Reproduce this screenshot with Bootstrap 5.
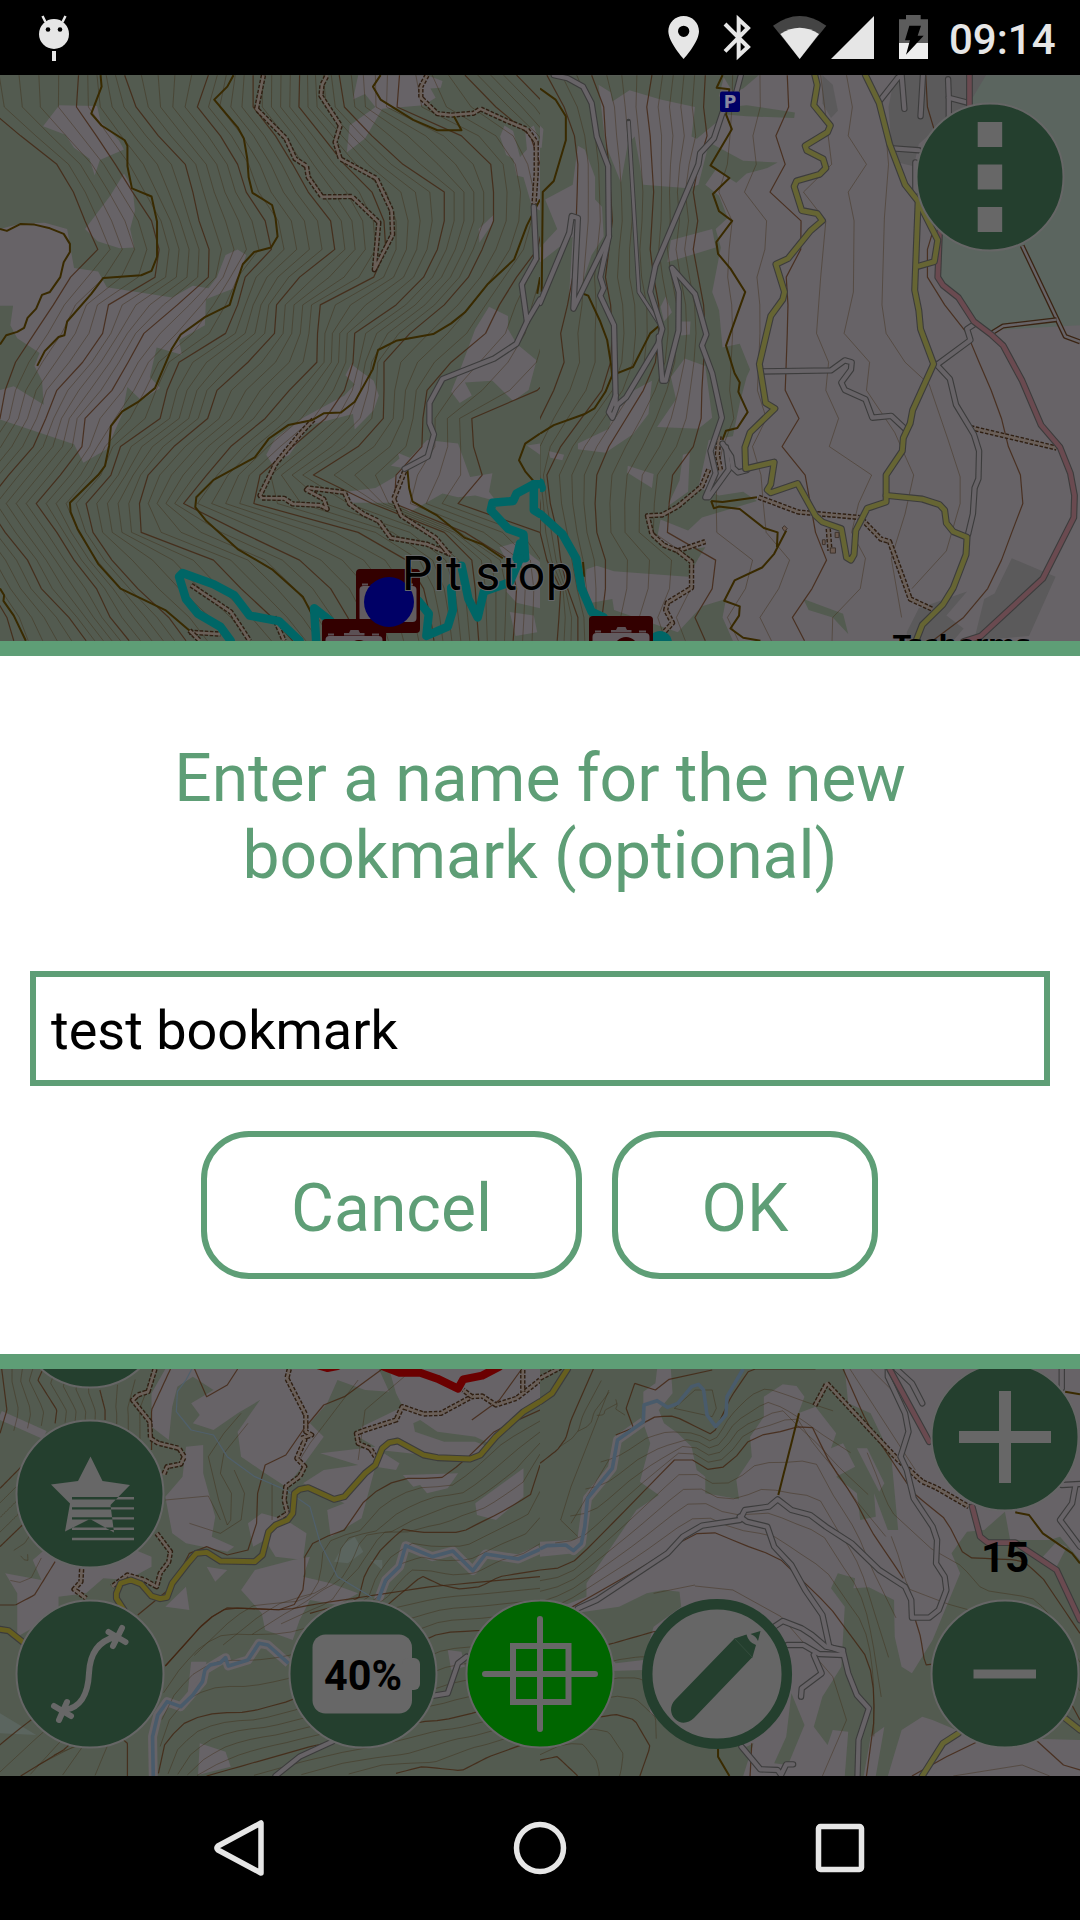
<!DOCTYPE html>
<html lang="en">
<head>
<meta charset="utf-8">
<meta name="viewport" content="width=device-width, initial-scale=1">
<title>New bookmark</title>
<link href="https://cdn.jsdelivr.net/npm/bootstrap@5.3.0/dist/css/bootstrap.min.css" rel="stylesheet">
<style>
body{font-family:Roboto,"Noto Sans",sans-serif;background:#000;width:1080px;height:1920px;overflow:hidden}
.statusbar{height:75px;color:#e6e6e6;font-size:42px;font-weight:500;line-height:1}
.clock{width:131px;padding-top:4px}
.stage{height:1701px}
.navkeys{height:144px}
.mapcanvas{display:block}
.ctl{width:146px;height:146px;padding:0;border:0;background:none}
.ctl svg,.ctlwide svg{display:block;overflow:visible}
.disc{fill:#243f2e;stroke:#666;stroke-width:2}
.ink{fill:#676767}
.wire{fill:none;stroke:#676767;stroke-width:6;stroke-linecap:round}
.at-menu{left:917px;top:29px}
.at-hidden{left:17px;top:1166px}
.at-star{left:17px;top:1346px}
.at-route{left:17px;top:1526px}
.at-batt{left:290px;top:1526px}
.at-gps{left:467px;top:1526px}
.at-pen{left:641px;top:1523px}
.at-plus{left:932px;top:1289px}
.at-minus{left:932px;top:1526px}
.zoomlevel{left:932px;top:1456px;width:146px;font-size:42px;font-weight:700;color:#000;line-height:54px}
.prompt{top:566px;height:728px;border-top:15px solid #5e9e76;border-bottom:15px solid #5e9e76;padding:84px 30px 0}
.prompt-title{font-size:66px;line-height:77.3px;letter-spacing:-.05px;color:#5e9e76;font-weight:400;margin:0 0 76px}
.prompt-input,.prompt-input:focus{height:115px;border:6px solid #5e9e76;border-radius:0;font-size:54px;line-height:1;color:#000;padding:5px 15px 0;box-shadow:none}
.prompt-row{margin-top:45px;gap:30px;padding-right:1px}
.prompt-btn{height:148px;border:6px solid #5e9e76;border-radius:48px;color:#5e9e76;font-size:66px;line-height:1;padding:8px 0 0}
.w-cancel{width:381px}.w-ok{width:266px}
.mapcanvas polyline,.mapcanvas polygon{vector-effect:non-scaling-stroke;stroke-linejoin:round}
.l{fill:none;stroke-linecap:butt}
</style>
<script src="https://cdn.jsdelivr.net/npm/bootstrap@5.3.0/dist/js/bootstrap.bundle.min.js"></script>
</head>
<body class="d-flex flex-column">
<header class="statusbar d-flex align-items-center justify-content-between flex-shrink-0">
  <svg width="110" height="75" viewBox="0 0 110 75"><path d="M39 34a15 15 0 0 1 30 0a15 15 0 0 1-30 0z" fill="#e6e6e6"/><path d="M45.500 22l-3-6M62.500 22l3-6" stroke="#e6e6e6" stroke-width="2.500"/><path d="M54 51v10" stroke="#e6e6e6" stroke-width="4"/><circle cx="48" cy="29.500" r="2.300"/><circle cx="60" cy="29.500" r="2.300"/></svg>
  <div class="d-flex align-items-center">
    <svg width="299" height="75" viewBox="0 0 897 225">
      <path fill="#e6e6e6" fill-rule="evenodd" d="M101 48c26 0 46 20 46 46 0 33-46 83-46 83S55 127 55 94c0-26 20-46 46-46zm0 29a17 17 0 1 0 0 34 17 17 0 0 0 0-34z"/>
      <path d="M225 72l69 69-28 26V58l28 26-69 70" fill="none" stroke="#e6e6e6" stroke-width="12"/>
      <path d="M449 177L369 77q80-58 160 0z" fill="#444"/><path d="M449 177l-58-75q58-38 116 0z" fill="#e6e6e6"/>
      <path d="M672 48v129H543z" fill="#e6e6e6"/>
      <path d="M747 58h21V45h44v13h22v119h-87z" fill="#5c5c5c"/><path d="M747 129h87v48h-87z" fill="#eee"/><path d="M778 77h35l-10 30h18l-53 57 12-43h-15z" fill="#000"/>
    </svg>
    <span class="clock">09:14</span>
  </div>
</header>

<main class="stage position-relative overflow-hidden flex-shrink-0">
  <svg class="mapcanvas" id="map" width="1080" height="1701" viewBox="0 75 1080 1701"></svg>

  <button class="ctl position-absolute at-menu" aria-label="Menu"><svg width="146" height="146"><circle class="disc" cx="73" cy="73" r="73.500"/><path class="ink" d="M60.700 18h24.500v25H60.700zM60.700 60.500h24.500v25H60.700zM60.700 103h24.500v25H60.700z"/></svg></button>
  <button class="ctl position-absolute at-hidden" aria-label="Tools"><svg width="146" height="146"><circle class="disc" cx="73" cy="73" r="73.500"/></svg></button>
  <button class="ctl position-absolute at-star" aria-label="Bookmarks"><svg width="146" height="146"><circle class="disc" cx="73" cy="73" r="73.500"/><path class="ink" fill-rule="evenodd" d="M73.500 35.500l12 24.500 27.500 4-19.500 20 3.500 27.500-24-13.500-25 12.500 5-28L34 63.500l27-3.500zM55 76h62v2.400H55zM55 86.200h62v2.400H55zM55 96.200h62v2.400H55zM55 106.600h62v2.400H55zM55 116.800h62v2.400H55z"/></svg></button>
  <button class="ctl position-absolute at-route" aria-label="Tracks"><svg width="146" height="146"><circle class="disc" cx="73" cy="73" r="73.500"/><path class="wire" d="M98 36C82 40 73 52 72 72c-1 22-8 34-24 37M91.500 31l17 10M105 27l-9 18M37 105l17 10M50 101l-8 18"/></svg></button>
  <button class="ctl position-absolute at-batt" aria-label="Battery"><svg width="146" height="146"><circle class="disc" cx="73" cy="73" r="73.500"/><rect class="ink" x="22.500" y="33.500" width="99.500" height="79" rx="13"/><rect class="ink" x="112" y="57" width="18" height="32" rx="6"/><text x="73" y="89" font-size="42" font-weight="700" text-anchor="middle" textLength="78" lengthAdjust="spacingAndGlyphs">40%</text></svg></button>
  <button class="ctl position-absolute at-gps" aria-label="Center on position"><svg width="146" height="146"><circle cx="73" cy="73" r="73.500" fill="#060" stroke="#666" stroke-width="2"/><path class="wire" d="M18 73h110M73 18v110M46 45h55.500v56H46z"/></svg></button>
  <button class="ctlwide p-0 border-0 bg-transparent position-absolute at-pen" aria-label="Edit"><svg width="152" height="152"><circle cx="76" cy="76" r="69.800" fill="#666" stroke="#243f2e" stroke-width="10.500"/><path fill="#243f2e" d="M93.500 40.500l12-4q2 8 9.500 10.500l-3.500 12L53 120c-6 6-14 6-19 1s-5.500-13 0-19zM109.500 36l10-3-2.500 10q-2-5-7.500-7z"/><path d="M93.500 40.500l18 19" stroke="#3b5344" stroke-width=".7"/></svg></button>
  <button class="ctl position-absolute at-plus" aria-label="Zoom in"><svg width="146" height="146"><circle class="disc" cx="73" cy="73" r="73.500"/><path class="ink" d="M67 27h12v92H67zM27 67h92v12H27z"/></svg></button>
  <div class="zoomlevel position-absolute text-center">15</div>
  <button class="ctl position-absolute at-minus" aria-label="Zoom out"><svg width="146" height="146"><circle class="disc" cx="73" cy="73" r="73.500"/><path class="ink" d="M41.500 68.600h62.500v8.800H41.500z"/></svg></button>

  <section class="prompt position-absolute start-0 w-100 bg-white" role="dialog">
    <h1 class="prompt-title text-center">Enter a name for the new<br>bookmark (optional)</h1>
    <input class="form-control prompt-input" type="text" value="test bookmark" aria-label="Name">
    <div class="prompt-row d-flex justify-content-center">
      <button class="btn prompt-btn w-cancel">Cancel</button>
      <button class="btn prompt-btn w-ok">OK</button>
    </div>
  </section>
</main>

<nav class="navkeys d-flex justify-content-center align-items-center flex-shrink-0">
  <svg width="300" height="144"><path d="M114 47v50L71 74q-2-2 0-4z" fill="none" stroke="#e6e6e6" stroke-width="5.500" stroke-linejoin="round"/></svg>
  <svg width="186" height="144"><circle cx="93" cy="72" r="23.500" fill="none" stroke="#e6e6e6" stroke-width="5.500"/></svg>
  <svg width="300" height="144"><rect x="185.500" y="50.500" width="43" height="43" rx="2" fill="none" stroke="#e6e6e6" stroke-width="5.500"/></svg>
</nav>

<script>
// Map data, one sheet per quarter of the view. Coordinates are sheet units.
const OPEN='#676367', WOOD='#535b50', MAJOR='rgba(66,36,16,.8)', MINOR='rgba(62,42,18,.42)', PATHC='#392a00';
const rows=[14,100,178,255,330,408,485,560,635,712,790,866,942,1018,1095,1172,1250,1325,1402,1480,1543];
const byRow=s=>s.split(',').map((x,i)=>[+x,rows[i]]);
const pts=s=>s.split(' ').map(p=>p.split(',').map(Number));
// evenly spaced points along a line, so that two lines can be blended
function even(line,n=30){
  const d=[0];for(let i=1;i<line.length;i++)d.push(d[i-1]+Math.hypot(line[i][0]-line[i-1][0],line[i][1]-line[i-1][1]));
  const out=[];let j=1;
  for(let k=0;k<n;k++){const t=d[d.length-1]*k/(n-1);while(j<d.length-1&&d[j]<t)j++;const f=(t-d[j-1])/(d[j]-d[j-1]||1);
    out.push([line[j-1][0]+f*(line[j][0]-line[j-1][0]),line[j-1][1]+f*(line[j][1]-line[j-1][1])]);}
  return out;
}
const blend=(a,b,n)=>{const r=[];for(let k=1;k<=n;k++)r.push(a.map((p,i)=>[p[0]+(b[i][0]-p[0])*k/(n+1),p[1]+(b[i][1]-p[1])*k/(n+1)]));return r;};

const sheets=[
{x:0,y:70,w:540,h:580,vh:1568,ground:WOOD,
 open:['125,152 172,95 282,97 292,140 345,190 360,215 290,243 275,285 260,240 215,210 190,175','360,280 385,320 392,380 378,430 390,480 347,482 283,463 247,430 320,340','0,430 60,415 130,413 195,430 215,535 285,545 310,587 500,615 560,583 605,590 630,560 655,500 690,485 715,500 680,590 598,620 595,690 520,730 528,770 455,750 435,830 465,860 410,893 370,857 355,930 310,1025 242,1062 215,1012 0,945 0,865 40,855 127,905 122,840 100,800 115,765 50,725 30,690 38,637 0,637','1040,14 1240,14 1285,30 1280,48 1250,50 1265,75 1230,95 1110,105 1060,185 1007,223 1015,150 1090,100 1060,65 1025,80','1465,150 1490,165 1510,235 1530,215 1525,165 1550,150 1568,200 1568,380 1545,370 1520,290 1500,285 1490,240 1470,230 1452,180','1390,430 1435,390 1430,415 1392,467','1420,640 1475,665 1475,700 1500,740 1558,785 1535,865 1490,895 1430,840 1350,845 1370,880 1335,900 1310,870 1340,800 1380,700','1020,795 1040,810 1085,840 1100,880 1085,920 1030,972 1025,930 900,960 840,1040 790,1065 773,1040 800,995 880,940 1000,880 1030,850 1003,825','1005,1140 1090,1130 1145,1100 1165,1075 1135,1070 1160,1050 1155,1035 1190,1048 1240,1000 1330,1010 1365,1100 1430,1090 1420,1140 1440,1165 1380,1150 1330,1155 1285,1145 1190,1195 1150,1170 1020,1170','1450,1290 1510,1275 1540,1310 1568,1330 1568,1455 1500,1440 1470,1410 1480,1340','1480,1465 1550,1475 1560,1520 1497,1530','1530,1015 1568,1010 1568,1040'],
 rowfam:[['-60,-40,60,165,213,247,284,205,155,100,45,15,0,-60,-120,-180,-130,-80,-30,20,40',4],['228,222,280,335,385,440,462,450,315,298,240,165,133,97,25,-40,15,80,120,200,250',4],['362,395,460,538,560,578,607,605,515,418,372,325,247,238,175,105,165,215,280,320,375',4],['605,573,640,690,715,770,788,712,690,655,520,485,465,350,322,250,270,325,400,490,540',4],['735,735,800,850,895,960,972,870,803,797,720,630,603,505,430,405,410,620,700,790,850',4],['870,868,935,1000,1080,1115,1120,1085,930,922,920,840,770,670,600,533,700,870,960,1010,1040',4],['985,1000,1080,1170,1290,1290,1270,1230,1150,1030,1025,1000,945,850,755,737,1040,1180,1230,1250,1260',4],['1160,1153,1340,1425,1433,1433,1400,1360,1290,1190,1115,1115,1113,1040,910,1080,1290,1370,1380,1385,1390',3],['1350,1440,1540,1568,1590,1580,1560,1500,1450,1410,1310,1240,1228,1225,1150,1145,1350,1480,1500,1495,1490',3],['1500,1590,1640,1700,1700,1680,1650,1640,1640,1640,1640,1560,1370,1375,1400,1330,1568,1600,1600,1600,1600',0]],
 path:['292,14 295,45 265,118 295,150 362,190 370,205 370,260 383,320 440,342 456,410 456,505 440,543 410,555 300,562 265,605 195,680 187,717 170,722 130,760 108,800','0,430 20,435 60,416 100,418 145,428 185,443 203,470 203,492 185,520 175,560 145,600 122,608 105,645 80,670 70,697 50,708 18,717 0,742','678,14 660,45 622,80 690,155 708,185 718,240 722,290 733,332 790,365 800,400 806,450 787,480 738,492 705,525 685,580 667,635 595,668 525,715 498,755 450,860 400,898 355,923 322,963 317,1015 305,1070 285,1095 203,1170 205,1195 225,1240 285,1335 350,1402 480,1460 550,1515','1568,350 1530,420 1493,512 1415,580 1350,655 1310,685 1258,714 1150,732 1098,757 1082,810 1030,897 990,926 940,928 905,947 837,960 780,997 740,1047 620,1108 570,1155 567,1182 600,1220 690,1295 790,1350 880,1425 905,1470','1105,14 1083,45 1105,80 1200,135 1270,163 1340,163 1318,125','1183,1080 1188,1130 1198,1167 1270,1205 1350,1265 1400,1282 1460,1320','0,1402 12,1420 10,1435 40,1475 75,1543','1568,983 1525,1010 1507,1055 1525,1085 1550,1112','1568,560 1560,605'],
 track:['765,14 745,105 830,185 857,240 890,260 895,290 935,343 1022,342 1100,412 1087,540 1140,445 1137,380 1093,293 988,240 973,195 988,150 932,70 935,40 950,14','1240,14 1222,45 1222,75 1270,118 1310,122 1375,117 1395,105 1470,137 1530,160 1557,195 1557,280 1550,370','910,945 870,985 800,1065 755,1150 760,1157 825,1158 850,1173 930,1177 950,1187 940,1160 890,1135 895,1130 1000,1142 1015,1173 1055,1200 1100,1220 1135,1265 1240,1282 1310,1310','1175,1085 1143,1160 1165,1205 1265,1265 1305,1310','555,1393 670,1465 725,1543','550,1520 640,1525','795,1478 825,1543','550,1515 580,1543'],
 road:['1550,370 1557,510 1515,580 1530,680 1568,620','1530,680 1500,740 1435,780 1285,835 1247,900 1247,955 1260,985 1242,1045 1175,1078'],
 cyan:['1568,1120 1550,1120 1500,1145 1490,1165 1430,1170 1425,1190 1475,1240 1520,1255 1525,1320 1500,1320 1510,1280','1510,1320 1480,1385 1405,1410 1387,1480 1360,1430 1340,1340','1215,1435 1245,1470 1238,1530 1300,1505 1315,1460 1310,1400','1550,1120 1550,1190 1568,1200','670,1543 640,1505 575,1470 540,1430 520,1370 530,1360 620,1390 680,1420 725,1475 810,1490 870,1543','918,1543 912,1455 960,1490']},
{x:540,y:70,w:540,h:580,vh:1568,ground:OPEN,
 wood:['0,14 535,14 520,70 550,100 600,95 740,115 738,130 600,125 540,120 450,190 500,200 590,245 690,250 660,265 600,280 570,305 510,270 480,310 520,340 545,400 510,430 525,480 500,600 520,650 530,750 580,740 610,810 600,830 580,900 560,990 490,1000 460,1130 520,1150 590,1140 630,1165 470,1210 430,1245 350,1215 340,1265 400,1300 480,1290 460,1320 430,1370 215,1355 165,1340 135,1350 130,1400 150,1440 210,1430 215,1460 400,1520 470,1450 540,1430 530,1480 560,1543 0,1543','765,1430 880,1470 895,1525 850,1480 780,1460','530,14 635,14 590,50 560,60'],
 open:['170,40 205,60 210,85 260,55 350,80 450,100 440,180 490,200 460,310 430,320 300,310 275,180 255,200 235,305 190,200','95,310 110,205 130,215 160,290 160,350 180,370 185,450 150,500 100,640 85,600 95,450 0,520 0,480 50,430 15,350','0,150 10,160 5,210 0,210','380,460 500,430 510,480 370,520','350,640 365,612 383,655 360,680','400,680 437,680 435,715 410,718','265,870 325,840 315,930 270,985 190,1035 110,1025 110,1010 200,970 210,930','420,780 480,800 500,940 460,970 340,965 395,890 380,830','255,1070 330,1092 325,1130 253,1088','415,1040 435,1035 430,1140 370,1180 405,1110','25,1030 70,1040 65,1055 30,1048'],
 built:['1030,14 1295,14 1285,70 1240,100 1160,150 1100,200 1085,260 1040,250 1020,200 1012,100','820,14 850,40 865,110 845,130 820,90','1370,1320 1497,1370 1420,1530 1260,1543 1290,1430 1320,1415','1065,1520 1100,1455 1240,1410 1180,1475 1230,1510 1200,1543 1065,1543'],
 park:['1295,14 1568,14 1568,690 1280,705 1160,560 1165,440 1240,100'],
 rowfam:[['20,70,100,110,108,105,100,95,80,60,70,40,0,-30,-10,0,0,20,60,55,50',2],['150,185,190,200,205,210,200,190,205,210,205,180,120,60,20,30,50,60,80,110,110',3],['325,310,320,325,330,325,320,330,345,345,335,300,250,200,165,160,165,190,190,180,190',4],['480,475,485,460,445,458,445,460,475,480,475,470,468,445,385,375,370,510,500,450,480',2],['718,722,685,712,668,758,757,715,720,718,715,712,752,703,770,785,800,832,790,733,768',0],['1120,1125,1150,1200,1170,1150,1125,1125,1175,1240,1275,1310,1340,1360,1395,1402,1370,1340,1300,1230,1140',0]],
 minor:['815,14 847,255 765,330 830,408 815,560 803,712 838,790 830,866 867,942 840,1018 963,1095 925,1172 905,1250 945,1320 930,1402 850,1480 848,1543','890,14 907,100 895,178 948,255 895,330 912,408 910,600 883,712 957,790 948,866 1030,980 1085,1095 1060,1200 1020,1320 1050,1480','1005,178 1012,255 1000,400 993,635 1005,712 1060,790 1130,850 1185,1000 1220,1100 1220,1172 1180,1300 1080,1402'],
 path:['0,50 45,80 75,125 75,190 40,300 8,330 5,600','530,14 513,48 550,52 540,120 557,160 495,258 550,292 502,335 520,382 558,408 512,465 517,497 553,537 596,600 540,745 565,820 580,845 576,870 603,925 573,968 540,975 530,1000','125,605 140,610 175,680 195,730 207,800 210,830','0,983 40,960 130,930 158,915 190,870 210,825 270,803 320,712 345,692','497,1165 530,1168 630,1155','497,1165 505,1185 520,1180 580,1187 650,1238 690,1250 688,1290','715,1245 680,1308 645,1345 565,1380 535,1435 580,1450 578,1475 553,1510 590,1535 640,1543','125,1330 128,1370'],
 lane:['1400,475 1525,720 1568,735','1310,712 1345,692 1500,675'],
 track:['635,1155 750,1195 930,1210 990,1268 1015,1275 1060,1390 1075,1430 1140,1458','1250,967 1500,1022','837,1240 842,1300','490,1080 470,1125 400,1180 355,1203 312,1205 325,1255 360,1285 400,1300 480,1275','400,1300 440,1330 440,1400 370,1440 365,1460 385,1495 360,1520','520,990 515,1040 525,1085'],
 road:['40,14 80,22 125,45 150,90 165,180 198,260 200,450 175,560 185,590 175,610 215,690 220,905','200,450 97,645 110,400 92,395 85,440 0,630','583,14 570,60 530,115 505,185 465,225 460,255 335,530 320,600 355,700 343,740 250,885 225,905 210,940 200,925 220,880','345,720 355,840 365,840 402,705 403,600 383,535 450,605 483,715 470,745 500,820 528,940 495,1030 510,1090 480,1155 490,1155 548,1080 540,1020','530,1010 555,1045 560,1075 575,1088 600,1082','645,815 845,812 885,785 905,790 903,810 875,845 885,865 945,890 965,940 1020,935 1060,970','1150,795 1190,835 1208,905 1260,985 1275,1030 1273,1105 1262,1130 1257,1200 1243,1255','1155,795 1250,730 1240,700 1260,688','985,85 1040,20 1050,14 1058,105','1112,14 1105,125','1185,25 1187,75 1240,88','1187,75 1187,130','1025,212 1100,217','1090,250 1090,330'],
 thin:['257,138 287,600 350,690'],
 pink:['1247,14 1247,110 1160,440 1155,560 1170,582 1215,615 1260,680 1310,715 1345,745 1400,840 1455,960 1510,1020 1540,1090 1552,1150 1550,1210 1460,1375 1280,1530 1230,1545'],
 yellow:['798,14 805,40 795,95 843,150 835,168 770,205 775,218 822,240 830,265 812,282 745,300 738,315 760,380 805,388 820,407 785,435 720,510 685,525 710,600 705,620 670,665 637,795 655,900 682,915 610,980 595,1020 597,1078 680,1060 670,1120 660,1135 670,1143 748,1118 800,1205 820,1222 875,1240 890,1318 903,1325 912,1310 917,1245 950,1185 1005,1168 1005,1095 1052,1030 1055,995 1075,955 1082,920 1143,795 1105,700 1100,650 1088,595 1098,355 1060,310 1015,200 985,90 945,14','1005,1150 1110,1160 1160,1175 1175,1190 1180,1225 1200,1248 1240,1263 1237,1310 1200,1400 1170,1445 1110,1500 1092,1543','1098,355 1155,460 1145,518 1100,530'],
 cyan:['0,1115 5,1130','0,1200 65,1255 105,1320 120,1400 150,1465 185,1480'],
 house:['703,1238 710,1232 718,1240 710,1247','843,1292 858,1292 858,1306 843,1306','820,1270 828,1270 828,1283 820,1283','857,1250 868,1250 868,1264 857,1264']},
{x:0,y:1360,w:540,h:420,vh:1260,ground:WOOD,
 open:['480,27 1100,27 1130,95 1060,90 980,60 950,130 900,190 940,230 870,330 830,380 770,340 700,290 690,215 755,120 690,160 620,210 560,190 580,165 555,130 620,90 560,50 515,80 500,140 490,240 440,200 440,100','590,255 590,340 625,470 615,530 680,560 660,575 540,550 500,520 480,410 530,350 540,260','720,490 760,460 830,480 890,520 880,600 800,590 770,540 735,560','1130,27 1568,27 1568,120 1420,250 1380,230 1270,215 1220,180 1200,190 1205,215 1290,245 1380,245 1420,260 1370,300 1100,270 1160,310 1150,330 1090,320 1050,475 960,530 950,450 1000,430 880,370 940,330 1040,315 930,280 1090,260 1040,230 1050,200 1170,140 1150,100','1170,345 1330,340 1300,385 1240,400 1220,375 1200,380','1380,430 1520,325 1520,410 1440,480 1385,465','370,560 440,590 440,620 370,660 300,655 250,700 170,710 170,760 50,830 50,700 15,640 120,660 95,600 140,560','700,690 740,630 850,600 900,590 880,650 960,670 1040,700 980,735 900,720 870,780 850,840 770,810 760,760','480,740 540,680 550,750','600,620 660,630 625,665','555,905 600,905 580,990 545,1000','580,1150 655,1175 670,1220 575,1245','1300,870 1340,875 1350,920 1310,930'],
 park:['970,605 1000,550 1030,530 1055,575 1010,610','0,1060 105,1125 0,1120','1075,600 1110,600 1110,630'],
 fam:[[['480,918 600,780 660,743 830,750 852,738 885,680 885,570 920,540 1000,510 1060,420 1110,380 1168,355 1280,355 1340,310 1440,210 1568,150',4],['900,760 1040,720 1060,640 1105,570 1168,508 1225,517 1340,517 1390,490 1450,460 1540,405 1568,315',3],['1100,780 1130,730 1225,648 1280,675 1335,687 1395,680 1450,650 1568,630',0]],[['480,918 600,780 660,743 830,750 900,735 1250,680 1568,650',3],['460,1240 480,1145 545,1080 630,1058 720,1057 845,1022 1280,818 1390,812 1568,790',4],['600,1248 900,1160 1225,1085 1290,1080 1370,1060 1568,1000',3],['1150,1240 1225,1220 1340,1232 1420,1190 1568,1135',0]],[['5,27 20,150 0,220',3],['125,27 110,60 165,150 160,190',4],['290,90 305,150 305,180',3],['495,27 440,150 440,270',0]],[['0,385 110,270',3],['0,560 120,440',3],['160,605 100,705 45,735 0,735',0]],[['-100,1240 40,1120 140,1040 200,1160 60,1248',4],['370,1248 370,1150 300,1090',0]]],
 major:['565,27 600,110 660,75 690,27','1110,27 1000,110 940,135 880,210 830,285 770,315 748,400 745,490 720,570 660,585 600,560 550,580 500,680 400,765','1515,27 1450,120 1370,180'],
 minor:['700,160 650,220 605,290 635,420 660,495 670,480 672,400 640,340 650,280 720,190','480,420 605,408 640,480','550,490 640,520 700,480 710,400 680,330','1040,60 900,250 870,300','1200,27 1060,150 1040,300','790,480 790,370'],
 track:['450,27 430,95 400,105 385,120 435,185 437,235 460,250 520,265 535,290 525,312 485,320 475,345','455,520 495,575 490,605 465,640 455,680 420,660 370,645 325,680','840,27 833,55 888,165 888,215 905,225 875,235 885,240 862,295 885,320 870,350 830,380 825,420 835,460 805,480','1090,290 1075,265 1040,250 1035,220 1060,210 1150,180 1168,140 1230,162 1280,160 1370,110 1400,108 1440,135 1500,115 1568,60','1518,30 1518,95','1370,110 1345,90','237,627 235,665 215,688 250,715'],
 bank:['0,165 130,225','445,1248 443,1130 458,1065 485,1025 525,1040 588,965 595,930 655,893 663,918 720,900 752,850 778,855 838,910','1098,720 1120,660 1160,620 1178,557 1255,590 1315,573 1373,632 1410,582 1505,597 1568,568'],
 river:['445,1248 443,1130 458,1065 485,1025 525,1040 560,1005 588,965 595,930 610,915 640,908 655,893 663,918 720,900 752,850 778,855 838,910','1098,720 1120,660 1160,620 1178,557 1255,590 1315,573 1373,632 1410,582 1505,597 1568,568'],
 brook:['557,27 540,60 515,95 512,155 555,210 620,225 660,290 740,350 830,390 900,440 930,550 980,650 1080,712'],
 road:['800,1248 870,1190 965,1145','1260,1007 1300,1000 1330,910 1355,890'],
 gold:['0,808 25,812 65,845','360,750 338,715 338,700 350,670 380,660 410,672 440,708 465,716 485,712 500,670 545,610 570,580 600,577 640,603 740,605 762,585 780,515 800,495 835,480 850,460 855,400 870,388 895,383 970,418 1000,410 1060,340 1090,315 1110,265 1130,248 1155,243 1230,285 1270,293 1365,297 1395,285 1440,230 1520,155 1568,125'],
 red:['1115,20 1160,38 1220,38 1270,56 1330,86 1345,58 1400,47 1450,20','925,16 950,24 980,18']},
{x:540,y:1360,w:540,h:420,vh:1260,ground:OPEN,
 wood:['0,27 340,27 335,70 300,95 300,180 225,230 215,330 135,410 125,520 100,540 0,545','380,27 885,27 895,130 960,160 1020,290 1040,510 1010,510 970,400 975,470 930,480 920,400 860,350 915,320 880,250 845,265 860,220 800,140 750,160 768,110 745,78 705,73 650,110 650,170 610,230 615,290 570,360 578,418 480,400 480,350 455,330 440,260 400,220 360,190 345,150 385,100','145,415 215,335 225,240 300,190 320,250 290,365 345,405 280,450 135,670 135,710 60,740 0,720 0,590 100,580','230,740 310,700 360,690 405,695 410,740 330,800 300,900 220,910 100,760','0,1248 0,940 300,930 320,1060 430,1140 600,1160 620,1150 590,1248','865,640 915,655 910,685 955,682 1028,720 1030,830 1050,920 1080,940 1140,840 1220,640 1195,580 1240,515 1290,510 1350,455 1365,540 1480,540 1510,530 1568,600 1568,1180 1300,1150 1140,1080 1110,1070 1050,1110 1010,1248 975,1248 1000,1100 960,1130 940,1248 885,1248 895,1115 850,1110 835,1155 795,1100 820,1010 875,920 885,740 845,685','730,1000 768,1095 720,1215 680,1210 715,1130'],
 open:['1210,1130 1568,1140 1568,1248 1140,1248','920,265 950,265 1000,370 985,395','1460,590 1500,545 1530,560 1500,620'],
 fam:[[['220,225 280,200 335,170 390,168 502,225 555,110 610,27 800,27',4],['0,630 50,625 105,600 220,480 390,300 445,300 502,338 555,308 617,228 672,222 785,190 845,315 910,410 960,510 1055,655',4],['0,790 95,740 300,620 410,545 445,522 500,515 625,568 690,590 840,740 955,900 970,1000 970,1080 948,1248',0]],[['880,27 950,190 1085,400 1180,480 1235,593 1400,600 1460,655 1568,820',2],['1090,780 1105,830 1118,915 1240,900 1400,890 1500,950 1568,1080',0]],[['155,27 90,180 75,235 50,270 0,310',4],['270,200 250,145 275,70',0]],[['0,890 205,852 330,815 480,800',3],['0,1090 180,1070 220,1063 275,1080 320,1160 290,1248',2],['-60,1260 0,1200 50,1190 110,1248 110,1260',0]]],
 major:['275,70 335,90 375,58 500,30','610,1248 615,1150','1080,1248 1180,1190 1300,1130 1440,1140 1520,1215 1568,1230'],
 minor:['390,145 450,90 500,90 512,145 500,170 390,145','60,480 90,380 200,90','60,480 110,530','90,490 200,300','450,678 560,690 700,770 850,950 890,1080 820,1248','330,700 450,675','900,27 1090,330','960,27 1060,130','1200,1248 1400,1215 1480,1248'],
 path:['752,160 692,405','1380,457 1420,465 1460,520 1545,580 1568,610','517,1165 517,1190 550,1248','1525,95 1568,103'],
 track:['0,55 60,22','798,137 833,70 1040,300 1110,365 1150,383 1245,440'],
 bank:['0,567 75,555 97,572 120,550 138,415 210,325 225,240 300,185'],
 river:['0,567 20,557 75,555 97,572 120,550 130,500 138,415 210,325 225,240 300,185 302,135 340,122 370,142 400,130 440,80 460,73 475,90 485,165 510,200 540,165 543,110 590,27'],
 pink:['1015,27 1130,245','1255,440 1278,530 1300,548 1380,548 1500,630 1568,780'],
 road:['110,745 165,720 370,580 415,530 470,497 580,480 595,450 665,440 690,418 730,450 785,465 830,500 905,550 985,630 1060,680 1078,720 1080,773 1130,773 1158,750 1180,690 1175,650 1150,610 1153,540 1140,500 1085,415 1065,330 1047,290 1070,215 1060,160 1010,50 1010,27','580,470 600,485 660,500 680,560 730,615 770,690 820,765 840,860 880,875 895,940 920,1005 955,1045 925,1140 922,1248','680,800 705,783 760,805 790,825 830,860 880,870','718,855 765,855 810,882 880,885','795,885 818,940 760,985 758,1010','1035,27 1080,70 1110,130','1515,27 1515,85','1515,375 1568,372','1555,375 1545,430 1510,480 1568,560','585,1160 640,1228 690,1230 700,1245 715,1213 735,1213'],
 gold:['0,125 35,100 80,27'],
 yellow:['1110,1248 1170,1150 1215,1120','1525,1075 1568,1110']}
];
const line=(p,c,w,extra='')=>`<polyline class="l" points="${Array.isArray(p)?p.map(q=>q.map(v=>v.toFixed(1))).join(' '):p}" stroke="${c}" stroke-width="${w}" ${extra}/>`;
const each=(a,f)=>(a||[]).map(f).join('');
const fill=(a,c)=>each(a,p=>`<polygon points="${p}" fill="${c}"/>`);
let out='';
for(const s of sheets){
  let g=`<rect width="1568" height="${s.vh}" fill="${s.ground}"/>`;
  g+=fill(s.wood,WOOD)+fill(s.open,OPEN)+fill(s.built,'#5b5a5b')+fill(s.park,'#5b655f');
  g+=each(s.bank,p=>line(p,OPEN,9));
  const family=(list,conv)=>{const ls=list.map(l=>conv(l[0]));let t='';
    list.forEach((l,i)=>{if(ls[i+1])blend(ls[i],ls[i+1],l[1]).forEach(m=>t+=line(m,MINOR,1));t+=line(ls[i],MAJOR,1.2);});return t;};
  if(s.rowfam)g+=family(s.rowfam,byRow);
  each(s.fam,f=>g+=family(f,p=>even(pts(p))));
  g+=each(s.minor,p=>line(p,MINOR,1))+each(s.major,p=>line(p,MAJOR,1.2));
  g+=each(s.brook,p=>line(p,'#50606c',1.2))+each(s.river,p=>line(p,'#495b6b',3.6));
  g+=each(s.track,p=>line(p,'#2f1f12',5.4,'stroke-dasharray="3.5 1.6"')+line(p,'#6a5f58',2.6));
  g+=each(s.path,p=>line(p,PATHC,2));
  g+=each(s.lane,p=>line(p,'#3a2413',5)+line(p,OPEN,2.4));
  g+=each(s.thin,p=>line(p,'#3c3c3c',4.6,'style="stroke-linecap:round"')+line(p,OPEN,2.8));
  const cased=(a,c,w)=>each(a,p=>line(p,'#3c3c3c',w+2.2,'style="stroke-linecap:round"'))+each(a,p=>line(p,c,w,'style="stroke-linecap:round"'));
  g+=cased(s.road,OPEN,4.2)+cased(s.pink,'#6a4a50',4.6)+cased(s.yellow,'#666533',4.8)+cased(s.gold,'#665f1f',4.8);
  g+=each(s.house,p=>`<polygon points="${p}" fill="#6b5a50" stroke="#3f342d" stroke-width="1"/>`);
  g+=each(s.cyan,p=>line(p,'#006666',8.5,'style="stroke-linecap:round"'))+each(s.red,p=>line(p,'#6b0000',8,'style="stroke-linecap:round"'));
  out+=`<svg x="${s.x}" y="${s.y}" width="${s.w}" height="${s.h}" viewBox="0 0 1568 ${s.vh}" preserveAspectRatio="none">${g}</svg>`;
}
const photo=(x,y)=>`<g transform="translate(${x} ${y})"><rect width="64" height="64" rx="4" fill="#330000"/><rect x="3.500" y="17" width="57" height="36" rx="4" fill="#625c60"/><path d="M6 16.500h6v-2H6zM22 16.500v-2.500h5l1.500-3h8l1.500 3h4.500v2.500zM50 16.500h7v-2h-7z" fill="#5b5054"/><circle cx="37" cy="33" r="12" fill="#330000"/></g>`;
out+=`<circle cx="660" cy="643" r="12" fill="#006666"/>`+photo(356,569)+photo(322,619)+photo(589,616);
out+=`<circle cx="389" cy="602" r="25" fill="#000066"/><rect x="720" y="91.500" width="20" height="20.500" rx="2" fill="#000066"/><text x="730" y="108" text-anchor="middle" font-family="DejaVu Sans" font-size="17" font-weight="700" fill="#8888a0">P</text>`;
out+=`<text x="402" y="590" font-size="48" textLength="171" stroke="#66686a" stroke-width="2" paint-order="stroke">Pit stop</text><text x="893" y="653" font-family="DejaVu Sans" font-weight="700" font-size="24" textLength="138" lengthAdjust="spacingAndGlyphs">Tscherms</text>`;
document.getElementById('map').innerHTML=out;
</script>
</body>
</html>
